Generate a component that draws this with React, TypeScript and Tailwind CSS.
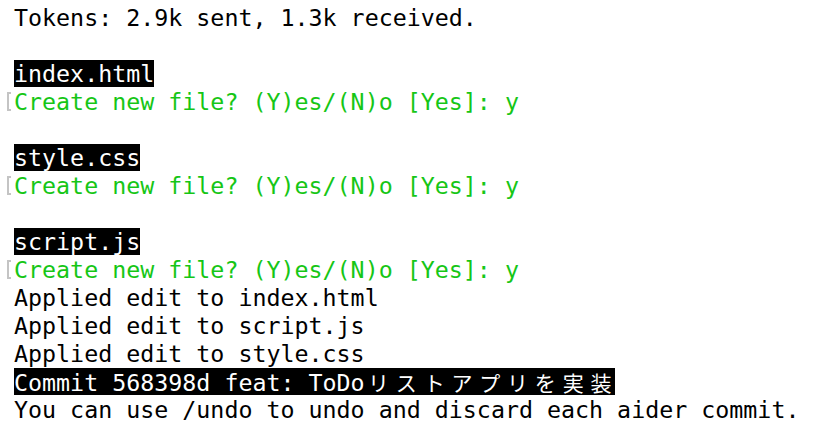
import React from "react";

const mono = "font-['DejaVu_Sans_Mono','Noto_Sans_CJK_JP',monospace]";

const Wide: React.FC<{ text: string }> = ({ text }) => (
  <>
    {Array.from(text).map((ch, i) => (
      <span
        key={i}
        className="inline-block w-[27.8px] text-center font-['Noto_Sans_CJK_JP',sans-serif] text-[21px]"
      >
        {ch}
      </span>
    ))}
  </>
);

const Line: React.FC<{ children?: React.ReactNode; className?: string }> = ({
  children,
  className = "",
}) => <div className={`h-[28px] whitespace-pre ${className}`}>{children}</div>;

const Hl: React.FC<{ children: React.ReactNode }> = ({ children }) => (
  <span className="inline-block h-[27px] bg-black text-white">{children}</span>
);

// leftover bracket the terminal left at the far left edge
const Bracket: React.FC = () => (
  <span className="absolute left-[-7px] top-[4px] h-[19px] w-[4px] border-y-2 border-l-2 border-[#c4c4c4]" />
);

const Prompt: React.FC = () => (
  <Line className="relative text-[#16c616]">
    <Bracket />
    Create new file? (Y)es/(N)o [Yes]: y
  </Line>
);

export default function App() {
  return (
    <div
      className={`w-[816px] h-[432px] overflow-hidden bg-white pt-[4px] pl-[14px] text-[23.3px] leading-[28px] text-black ${mono}`}
    >
      <Line>Tokens: 2.9k sent, 1.3k received.</Line>
      <Line />
      <Line>
        <Hl>index.html</Hl>
      </Line>
      <Prompt />
      <Line />
      <Line>
        <Hl>style.css</Hl>
      </Line>
      <Prompt />
      <Line />
      <Line>
        <Hl>script.js</Hl>
      </Line>
      <Prompt />
      <Line>Applied edit to index.html</Line>
      <Line>Applied edit to script.js</Line>
      <Line>Applied edit to style.css</Line>
      <Line>
        <Hl>
          Commit 568398d feat: ToDo
          <Wide text="リストアプリを実装" />
        </Hl>
      </Line>
      <Line>You can use /undo to undo and discard each aider commit.</Line>
    </div>
  );
}
